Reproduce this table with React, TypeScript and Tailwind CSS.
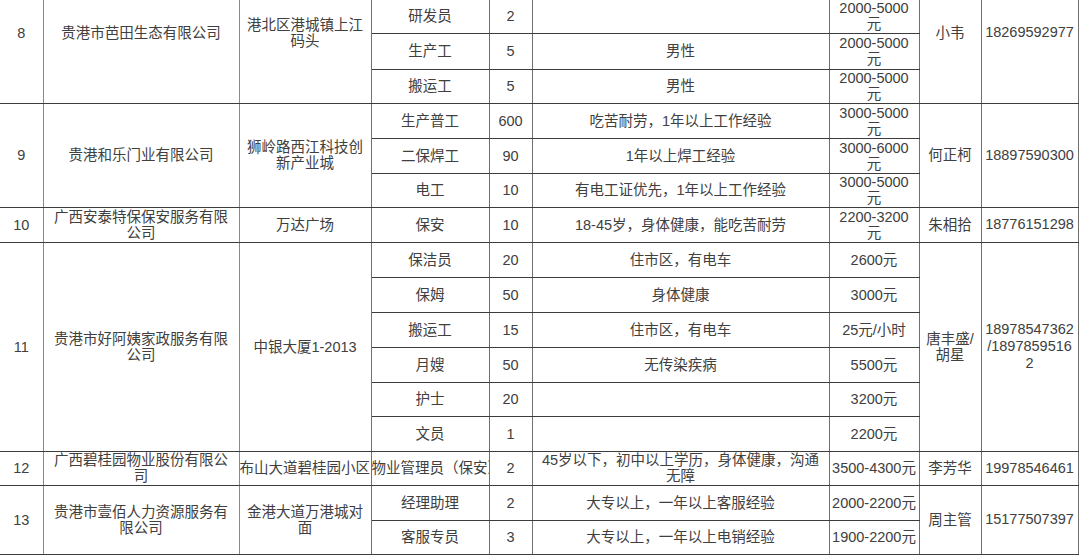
import React from 'react';

type Sub = { pos: React.ReactNode; num: string; req: React.ReactNode; pay: React.ReactNode };

type Company = {
  no: string;
  name: React.ReactNode;
  addr: React.ReactNode;
  contact: React.ReactNode;
  phone: React.ReactNode;
  subs: Sub[];
};

const span = (a: string, b: string) => (
  <>
    {a}
    <br />
    {b}
  </>
);

const companies: Company[] = [
  {
    no: '8',
    name: '贵港市芭田生态有限公司',
    addr: span('港北区港城镇上江', '码头'),
    contact: '小韦',
    phone: '18269592977',
    subs: [
      // first job sits above the visible area, kept so the merged cells line up
      { pos: '技术员', num: '2', req: '', pay: span('3000-6000', '元') },
      { pos: '研发员', num: '2', req: '', pay: span('2000-5000', '元') },
      { pos: '生产工', num: '5', req: '男性', pay: span('2000-5000', '元') },
      { pos: '搬运工', num: '5', req: '男性', pay: span('2000-5000', '元') },
    ],
  },
  {
    no: '9',
    name: '贵港和乐门业有限公司',
    addr: span('狮岭路西江科技创', '新产业城'),
    contact: '何正柯',
    phone: '18897590300',
    subs: [
      { pos: '生产普工', num: '600', req: '吃苦耐劳，1年以上工作经验', pay: span('3000-5000', '元') },
      { pos: '二保焊工', num: '90', req: '1年以上焊工经验', pay: span('3000-6000', '元') },
      { pos: '电工', num: '10', req: '有电工证优先，1年以上工作经验', pay: span('3000-5000', '元') },
    ],
  },
  {
    no: '10',
    name: span('广西安泰特保保安服务有限', '公司'),
    addr: '万达广场',
    contact: '朱相拾',
    phone: '18776151298',
    subs: [{ pos: '保安', num: '10', req: '18-45岁，身体健康，能吃苦耐劳', pay: span('2200-3200', '元') }],
  },
  {
    no: '11',
    name: span('贵港市好阿姨家政服务有限', '公司'),
    addr: '中银大厦1-2013',
    contact: span('唐丰盛/', '胡星'),
    phone: (
      <>
        18978547362
        <br />
        /1897859516
        <br />2
      </>
    ),
    subs: [
      { pos: '保洁员', num: '20', req: '住市区，有电车', pay: '2600元' },
      { pos: '保姆', num: '50', req: '身体健康', pay: '3000元' },
      { pos: '搬运工', num: '15', req: '住市区，有电车', pay: '25元/小时' },
      { pos: '月嫂', num: '50', req: '无传染疾病', pay: '5500元' },
      { pos: '护士', num: '20', req: '', pay: '3200元' },
      { pos: '文员', num: '1', req: '', pay: '2200元' },
    ],
  },
  {
    no: '12',
    name: span('广西碧桂园物业股份有限公', '司'),
    addr: 'overflow',
    contact: '李芳华',
    phone: '19978546461',
    subs: [
      {
        pos: 'overflow',
        num: '2',
        req: span('45岁以下，初中以上学历，身体健康，沟通', '无障'),
        pay: '3500-4300元',
      },
    ],
  },
  {
    no: '13',
    name: span('贵港市壹佰人力资源服务有', '限公司'),
    addr: span('金港大道万港城对', '面'),
    contact: '周主管',
    phone: '15177507397',
    subs: [
      { pos: '经理助理', num: '2', req: '大专以上，一年以上客服经验', pay: '2000-2200元' },
      { pos: '客服专员', num: '3', req: '大专以上，一年以上电销经验', pay: '1900-2200元' },
    ],
  },
];

// row heights read off the sheet, hidden first row included
const ROW_H = [
  'h-[35px]', 'h-[35px]', 'h-[36px]', 'h-[34px]', 'h-[35px]', 'h-[35px]', 'h-[34px]', 'h-[35px]', 'h-[35px]',
  'h-[35px]', 'h-[35px]', 'h-[35px]', 'h-[34px]', 'h-[35px]', 'h-[34px]', 'h-[35px]', 'h-[34px]',
];

const cell = 'border-r border-b border-r-[#6f6f6f] border-b-[#3c3c3c] align-middle text-center p-0';

export default function App() {
  let row = 0;
  return (
    <div
      className="w-[1080px] h-[555px] overflow-hidden bg-white text-[#404040] text-[14.5px] leading-[16px]"
      style={{ fontFamily: '"Liberation Sans", "Noto Sans CJK SC", sans-serif' }}
    >
      <table className="table-fixed border-collapse w-[1078px] -mt-[37px]">
        <colgroup>
          <col className="w-[43px]" />
          <col className="w-[196px]" />
          <col className="w-[132px]" />
          <col className="w-[118px]" />
          <col className="w-[43px]" />
          <col className="w-[297px]" />
          <col className="w-[90px]" />
          <col className="w-[62px]" />
          <col className="w-[97px]" />
        </colgroup>
        <tbody>
          {companies.map((c) =>
            c.subs.map((s, i) => (
              <tr key={c.no + '-' + i} className={ROW_H[row++]}>
                {i === 0 && (
                  <>
                    <td rowSpan={c.subs.length} className={`${cell} border-r-[#8a8a8a]`}>
                      {c.no}
                    </td>
                    <td rowSpan={c.subs.length} className={`${cell} border-r-[#8a8a8a] px-2`}>
                      {c.name}
                    </td>
                    {c.addr === 'overflow' ? (
                      <td className={`${cell} text-left whitespace-nowrap overflow-visible`}>
                        布山大道碧桂园小区
                      </td>
                    ) : (
                      <td rowSpan={c.subs.length} className={`${cell} px-1`}>
                        {c.addr}
                      </td>
                    )}
                  </>
                )}
                {s.pos === 'overflow' ? (
                  <td className={`${cell} text-left whitespace-nowrap overflow-hidden`}>
                    物业管理员（保安）
                  </td>
                ) : (
                  <td className={cell}>{s.pos}</td>
                )}
                <td className={cell}>{s.num}</td>
                <td className={cell}>{s.req}</td>
                <td className={cell}>{s.pay}</td>
                {i === 0 && (
                  <>
                    <td rowSpan={c.subs.length} className={cell}>
                      {c.contact}
                    </td>
                    <td rowSpan={c.subs.length} className={`${cell} leading-[17px]`}>
                      {c.phone}
                    </td>
                  </>
                )}
              </tr>
            ))
          )}
        </tbody>
      </table>
    </div>
  );
}
